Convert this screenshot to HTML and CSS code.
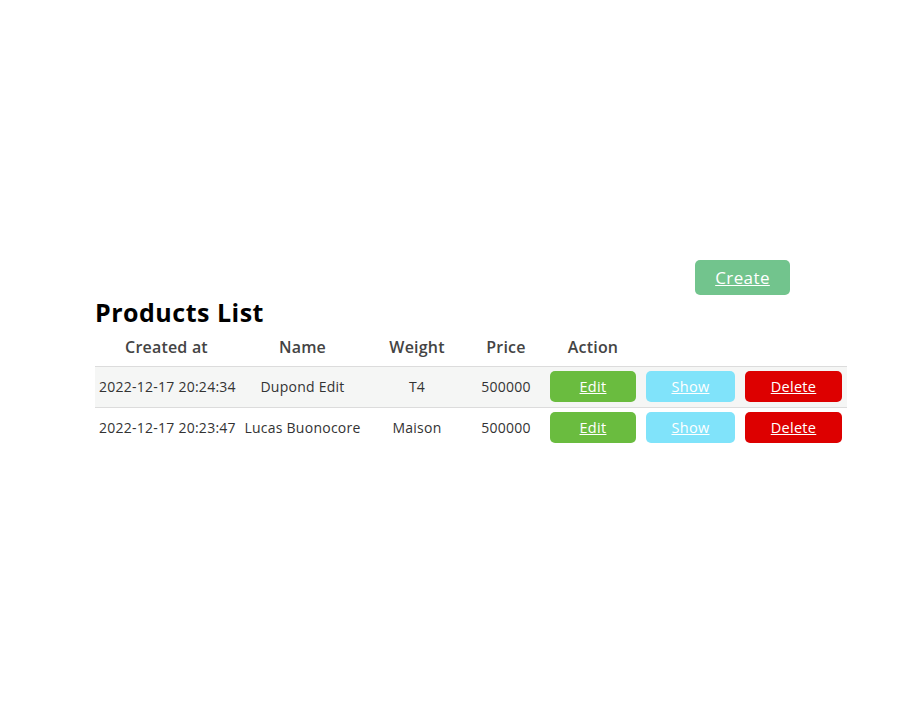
FILE: index.html
```html
<!DOCTYPE html>
<html>
<head>
<meta charset="utf-8">
<link rel="stylesheet" href="styles.css">
</head>
<body>
<div class="page">
  <div class="toolbar"><a class="btn btn-create" href="#">Create</a></div>
  <h1 class="title">Products List</h1>
  <table class="list">
    <colgroup>
      <col class="c1"><col class="c2"><col class="c3"><col class="c4"><col class="c5"><col class="c6"><col class="c7">
    </colgroup>
    <thead>
      <tr><th>Created at</th><th>Name</th><th>Weight</th><th>Price</th><th>Action</th><th></th><th></th></tr>
    </thead>
    <tbody>
      <tr class="odd">
        <td>2022-12-17 20:24:34</td><td>Dupond Edit</td><td>T4</td><td>500000</td>
        <td><a class="btn btn-edit" href="#">Edit</a></td>
        <td><a class="btn btn-show" href="#">Show</a></td>
        <td><a class="btn btn-delete" href="#">Delete</a></td>
      </tr>
      <tr>
        <td>2022-12-17 20:23:47</td><td>Lucas Buonocore</td><td>Maison</td><td>500000</td>
        <td><a class="btn btn-edit" href="#">Edit</a></td>
        <td><a class="btn btn-show" href="#">Show</a></td>
        <td><a class="btn btn-delete" href="#">Delete</a></td>
      </tr>
    </tbody>
  </table>
</div>
</body>
</html>
```

FILE: styles.css
```css
html, body { margin: 0; padding: 0; background: #fff; }
body { font-family: "Open Sans", "DejaVu Sans", sans-serif; color: #333; }
.page { width: 752px; margin: 0 0 0 95px; padding-top: 260px; }
.toolbar { display: flex; justify-content: flex-end; padding-right: 57px; }
.btn { display: flex; align-items: center; justify-content: center; color: #fff; text-decoration: underline; border-radius: 5px; box-sizing: border-box; }
.btn-create { width: 95px; height: 35px; background: #72c48d; font-size: 17px; font-weight: 400; letter-spacing: 0.4px; }
.title { margin: 0; font-size: 25px; font-weight: 700; color: #000; line-height: 34px; letter-spacing: 0.5px; }
.list { border-collapse: collapse; table-layout: fixed; width: 752px; margin-top: 4px; }
.c1 { width: 143px; } .c2 { width: 129px; } .c3 { width: 100px; } .c4 { width: 78px; }
.c5 { width: 96px; } .c6 { width: 99px; } .c7 { width: 107px; }
th { font-size: 16px; font-weight: 600; letter-spacing: 0.2px; color: #444; height: 33px; padding: 0 5px 4px; box-sizing: border-box; text-align: center; border-bottom: 1px solid #dcdcdc; }
td { font-size: 14px; letter-spacing: 0.25px; color: #333; height: 41px; padding: 0 4px; text-align: center; border-bottom: 1px solid #dcdcdc; box-sizing: border-box; white-space: nowrap; }
tbody tr:last-child td { border-bottom: none; }
tr.odd td { background: #f5f6f5; }
td .btn { height: 31px; font-size: 14.5px; font-weight: 400; letter-spacing: 0.3px; margin: 0 1px; }
.btn-edit { background: #6abc3f; }
.btn-show { background: #80e3fa; }
.btn-delete { background: #dd0000; }
```
